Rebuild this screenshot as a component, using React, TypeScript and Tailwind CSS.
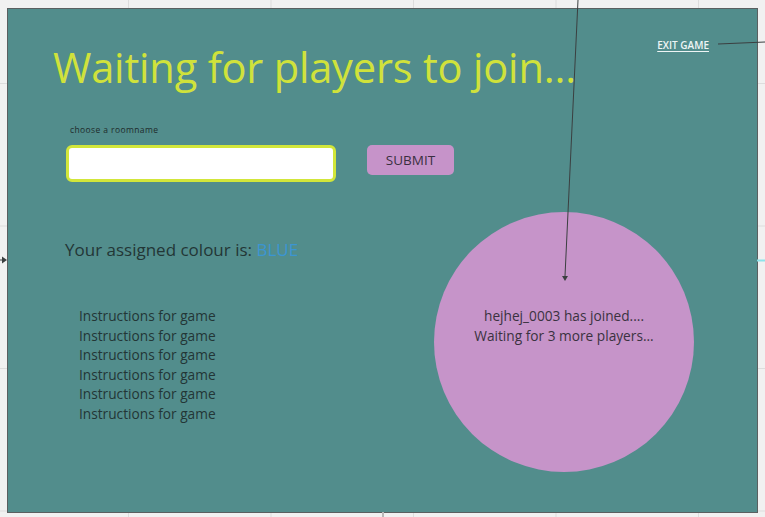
import React from 'react';

const instructions = Array.from({ length: 6 }, () => 'Instructions for game');

function Connectors() {
  return (
    <svg
      className="absolute inset-0 pointer-events-none"
      width={765}
      height={517}
      viewBox="0 0 765 517"
    >
      <line x1={578} y1={0} x2={565} y2={276} stroke="#3b3f40" strokeWidth={1} />
      <path d="M562 276 L568 276 L565 281 Z" fill="#3b3f40" />
      <line x1={718} y1={44} x2={765} y2={42} stroke="#3b3f40" strokeWidth={1} />
      <line x1={0} y1={260} x2={4} y2={260} stroke="#3b3f40" strokeWidth={1} />
      <path d="M2 256.5 L7 260 L2 263.5 Z" fill="#3b3f40" />
      <line x1={757} y1={260.5} x2={765} y2={260.5} stroke="#8fe3ea" strokeWidth={2} />
      <line x1={383} y1={512} x2={383} y2={517} stroke="#b8b8b8" strokeWidth={2} />
    </svg>
  );
}

export default function App() {
  return (
    <div
      className="relative w-[765px] h-[517px] overflow-hidden bg-[#f1f1f1] bg-[linear-gradient(to_right,#dddddd_1px,transparent_1px),linear-gradient(to_bottom,#dddddd_1px,transparent_1px)] bg-[size:142.5px_142.5px] bg-[position:128px_83px]"
      style={{ fontFamily: '"Open Sans", "Noto Sans", sans-serif' }}
    >
      {/* Frame */}
      <div className="absolute left-[7px] top-[8px] w-[751px] h-[505px] border border-[#5a5f60] bg-[#528d8c] flex flex-col">
        {/* Header */}
        <div className="flex items-start justify-between">
          <h1 className="ml-[45px] mt-[38px] text-[41.6px] leading-none text-[#d0e23b] tracking-[-0.2px]">
            Waiting for players to join...
          </h1>
          <a className="mr-[48px] mt-[31px] text-[10px] leading-none font-semibold text-[#eef5f5] underline underline-offset-2">
            EXIT GAME
          </a>
        </div>

        {/* Room form */}
        <div className="ml-[58px] mt-[37px]">
          <p className="ml-[4px] text-[8.5px] leading-none tracking-[0.4px] text-[#1e2b2b]">choose a roomname</p>
          <div className="mt-[11px] flex items-start gap-[31px]">
            <input
              type="text"
              className="w-[270px] h-[37px] rounded-[6px] border-[3px] border-[#d2e63a] bg-white outline-none px-2"
            />
            <button className="w-[87px] h-[30px] rounded-[5px] bg-[#c693c9] text-[13.5px] text-[#3a2f3f]">
              SUBMIT
            </button>
          </div>
        </div>

        {/* Lower area */}
        <div className="mt-[30px] flex items-start">
          <div className="ml-[57px] mt-[29px]">
            <p className="text-[17px] leading-none text-[#233636]">
              Your assigned colour is: <span className="text-[#3b95d2]">BLUE</span>
            </p>
            <ul className="ml-[14px] mt-[48px] text-[13.7px] leading-[19.6px] text-[#233636]">
              {instructions.map((t, i) => (
                <li key={i}>{t}</li>
              ))}
            </ul>
          </div>
          <div className="ml-auto mr-[63px] w-[260px] h-[260px] rounded-full bg-[#c694c9] flex flex-col items-center pt-[94px] text-[13.7px] leading-[20px] text-[#3a3240]">
            <p>hejhej_0003 has joined....</p>
            <p>Waiting for 3 more players...</p>
          </div>
        </div>
      </div>

      <Connectors />
    </div>
  );
}
